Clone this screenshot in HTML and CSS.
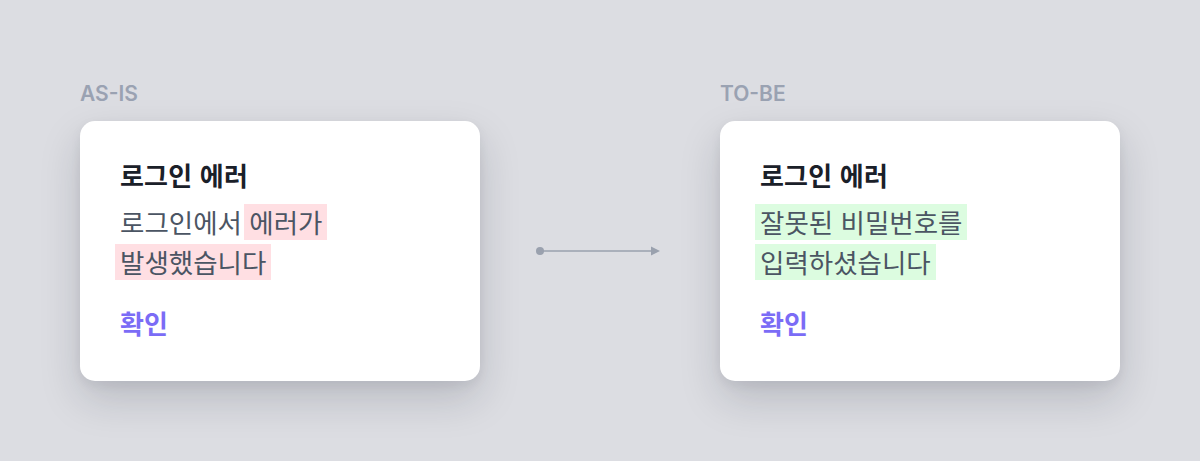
FILE: index.html
```html
<!DOCTYPE html>
<html lang="ko">
<head>
<meta charset="utf-8">
<title>AS-IS / TO-BE</title>
<link rel="stylesheet" href="styles.css">
</head>
<body>
<main class="stage">
  <section class="panel">
    <div class="label">AS-IS</div>
    <div class="card">
      <h2 class="title">로그인 에러</h2>
      <p class="body">로그인에서 <span class="hl hl-bad">에러가 발생했습니다</span></p>
      <button class="confirm" type="button">확인</button>
    </div>
  </section>
  <div class="connector">
    <svg class="arrow" width="128" height="12" viewBox="0 0 128 12" aria-hidden="true">
      <circle cx="4" cy="6" r="4" fill="#9aa1ae"/>
      <line x1="4" y1="6" x2="117" y2="6" stroke="#9aa1ae" stroke-width="1.3"/>
      <path d="M115 1.5 L124 6 L115 10.5 Z" fill="#9aa1ae"/>
    </svg>
  </div>
  <section class="panel">
    <div class="label">TO-BE</div>
    <div class="card">
      <h2 class="title">로그인 에러</h2>
      <p class="body"><span class="hl hl-good">잘못된 비밀번호를 입력하셨습니다</span></p>
      <button class="confirm" type="button">확인</button>
    </div>
  </section>
</main>
</body>
</html>
```

FILE: styles.css
```css
html, body {
  margin: 0;
  padding: 0;
}

body {
  background: #dcdde2;
  font-family: "Noto Sans CJK KR", "Noto Sans", sans-serif;
  width: 1200px;
  height: 461px;
  overflow: hidden;
}

.stage {
  display: flex;
  align-items: flex-end;
  padding: 82px 0 0 80px;
}

.panel {
  display: flex;
  flex-direction: column;
  width: 400px;
}

.label {
  font-family: Inter, "Noto Sans", sans-serif;
  font-weight: 600;
  font-size: 21px;
  line-height: 24px;
  color: #9aa2b2;
  margin-bottom: 15px;
}

.card {
  box-sizing: border-box;
  width: 400px;
  height: 260px;
  background: #ffffff;
  border-radius: 15px;
  padding: 38px 40px 0 40px;
  box-shadow: 0 18px 40px rgba(20, 24, 40, 0.17), 0 4px 12px rgba(20, 24, 40, 0.06);
}

.title {
  margin: 0;
  font-size: 26px;
  line-height: 32px;
  font-weight: 700;
  color: #1a2029;
  letter-spacing: 0.2px;
}

.body {
  margin: 11px 0 0 0;
  font-size: 26.5px;
  line-height: 40px;
  font-weight: 400;
  color: #4b5563;
  word-break: keep-all;
}

.hl {
  padding: 0 5px;
  margin-left: -5px;
  -webkit-box-decoration-break: clone;
  box-decoration-break: clone;
  background-repeat: no-repeat;
  background-position: 0 50%;
  background-size: 100% 36px;
}

.hl-bad {
  background-image: linear-gradient(#ffdfe3, #ffdfe3);
}

.hl-good {
  background-image: linear-gradient(#dcfce0, #dcfce0);
}

.confirm {
  display: block;
  margin: 25px 0 0 0;
  padding: 0;
  border: 0;
  background: none;
  font-family: "Noto Sans CJK KR", "Noto Sans", sans-serif;
  font-size: 26px;
  line-height: 32px;
  font-weight: 700;
  color: #7b6cf6;
  cursor: pointer;
}

.connector {
  width: 240px;
  height: 260px;
  display: flex;
  align-items: center;
  justify-content: center;
}

.arrow {
  display: block;
}
```
